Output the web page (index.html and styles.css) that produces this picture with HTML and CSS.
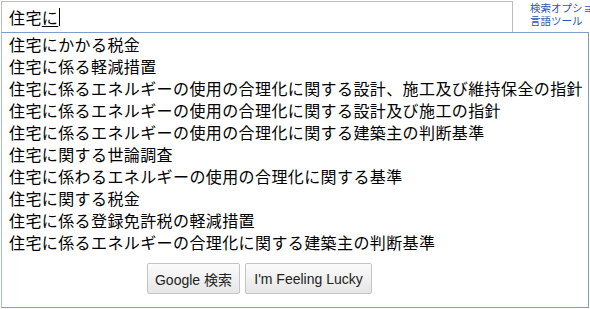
FILE: index.html
```html
<!DOCTYPE html>
<html lang="ja">
<head>
<meta charset="utf-8">
<link rel="stylesheet" href="styles.css">
</head>
<body>
<div class="top">
  <div class="input"><span>住宅</span><span class="comp">に</span><span class="caret"></span></div>
  <div class="links">
    <a href="#">検索オプション</a>
    <a href="#">言語ツール</a>
  </div>
</div>
<div class="dropdown">
  <ul class="list">
    <li>住宅にかかる税金</li>
    <li>住宅に係る軽減措置</li>
    <li>住宅に係るエネルギーの使用の合理化に関する設計、施工及び維持保全の指針</li>
    <li>住宅に係るエネルギーの使用の合理化に関する設計及び施工の指針</li>
    <li>住宅に係るエネルギーの使用の合理化に関する建築主の判断基準</li>
    <li>住宅に関する世論調査</li>
    <li>住宅に係わるエネルギーの使用の合理化に関する基準</li>
    <li>住宅に関する税金</li>
    <li>住宅に係る登録免許税の軽減措置</li>
    <li>住宅に係るエネルギーの合理化に関する建築主の判断基準</li>
  </ul>
  <div class="buttons">
    <button class="btn btn-search">Google 検索</button>
    <button class="btn btn-lucky">I'm Feeling Lucky</button>
  </div>
</div>
</body>
</html>
```
FILE: styles.css
```css
html, body {
  margin: 0;
  padding: 0;
  background: #fff;
  overflow: hidden;
}
body {
  width: 590px;
  height: 309px;
  font-family: "Noto Sans CJK JP", "Liberation Sans", sans-serif;
  color: #000;
}
.top {
  display: flex;
  height: 32px;
}
.input {
  box-sizing: border-box;
  flex: 0 0 512px;
  width: 512px;
  height: 31px;
  margin-left: 1px;
  margin-top: 1px;
  border: 1px solid #bdbdbd;
  border-bottom: none;
  padding-left: 7px;
  font-size: 16px;
  letter-spacing: 0.4px;
  line-height: 28px;
  display: flex;
  align-items: center;
}
.comp {
  text-decoration: underline;
  text-underline-offset: 2px;
}
.caret {
  display: inline-block;
  width: 1px;
  height: 18px;
  background: #000;
  margin-left: 1px;
}
.links {
  flex: 1 1 auto;
  min-width: 0;
  display: flex;
  flex-direction: column;
  padding-left: 17px;
  padding-top: 1px;
  white-space: nowrap;
  overflow: hidden;
  font-size: 10.5px;
  line-height: 13px;
}
.links a {
  color: #2a55b0;
  text-decoration: none;
}
.dropdown {
  box-sizing: border-box;
  width: 588px;
  height: 276px;
  margin-left: 1px;
  border: 1px solid #7f9ccb;
  border-left-color: #a8bcd8;
}
.list {
  list-style: none;
  margin: 0;
  padding: 0 0 0 7px;
  font-size: 16px;
  letter-spacing: 0.4px;
  line-height: 22px;
  white-space: nowrap;
}
.buttons {
  display: flex;
  gap: 5px;
  padding-left: 145px;
  margin-top: 10px;
}
.btn {
  box-sizing: border-box;
  height: 31px;
  border: 1px solid #c4c4c4;
  border-radius: 2px;
  background: linear-gradient(#fbfbfb, #e6e6e6);
  font-family: "Liberation Sans", "Noto Sans CJK JP", sans-serif;
  font-size: 14px;
  color: #222;
  padding: 0;
}
.btn-search { width: 93px; }
.btn-lucky { width: 127px; }
```
